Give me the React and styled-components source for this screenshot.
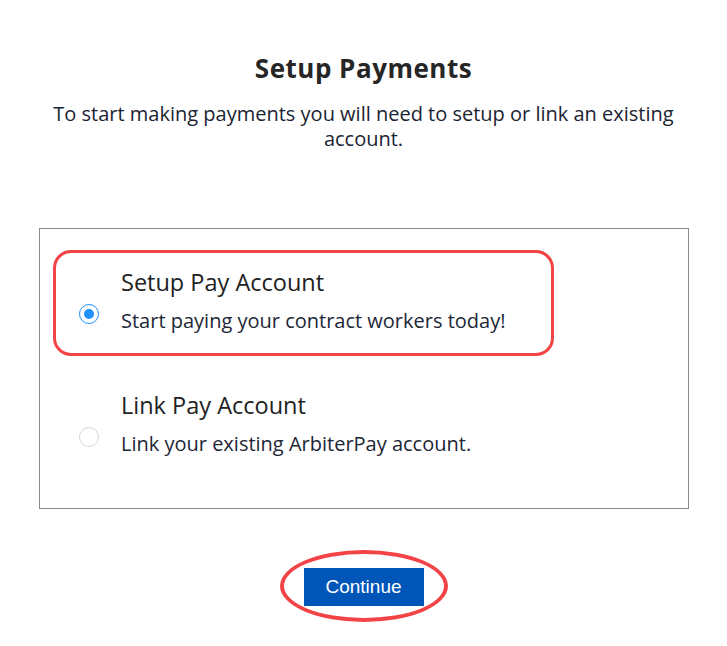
import React, { useState } from 'react'
import styled, { createGlobalStyle } from 'styled-components'

const GlobalStyle = createGlobalStyle`
  body {
    margin: 0;
    background: #fff;
    font-family: "Open Sans", "Liberation Sans", sans-serif;
  }
`

const options = [
  { id: 'setup', title: 'Setup Pay Account', text: 'Start paying your contract workers today!' },
  { id: 'link', title: 'Link Pay Account', text: 'Link your existing ArbiterPay account.' },
]

function App() {
  const [selected, setSelected] = useState('setup')

  return (
    <Page>
      <GlobalStyle />
      <Title>Setup Payments</Title>
      <Intro>To start making payments you will need to setup or link an existing account.</Intro>
      <Panel>
        {options.map((opt) => (
          <Option
            key={opt.id}
            $highlighted={opt.id === 'setup'}
            onClick={() => setSelected(opt.id)}
          >
            <Radio $checked={selected === opt.id} />
            <OptionBody>
              <OptionTitle>{opt.title}</OptionTitle>
              <OptionText>{opt.text}</OptionText>
            </OptionBody>
          </Option>
        ))}
      </Panel>
      <ButtonWrap>
        <Button>Continue</Button>
        <Circle />
      </ButtonWrap>
    </Page>
  )
}

const Page = styled.div`
  display: flex;
  flex-direction: column;
  align-items: center;
  padding-top: 51px;
  padding-bottom: 30px;
`
const Title = styled.h1`
  margin: 0;
  font-family: "Open Sans", "Liberation Sans", sans-serif;
  font-size: 26px;
  font-weight: 700;
  letter-spacing: 0.5px;
  color: #262626;
  line-height: 34px;
`
const Intro = styled.p`
  margin: 16px 0 0;
  width: 640px;
  text-align: center;
  font-size: 20px;
  line-height: 25px;
  color: #1b2432;
`
const Panel = styled.div`
  box-sizing: border-box;
  width: 650px;
  height: 281px;
  margin-top: 77px;
  margin-left: 1px;
  border: 1px solid #8a8a8a;
  padding: 21px 13px 0;
  display: flex;
  flex-direction: column;
  gap: 17px;
`
const Option = styled.div`
  box-sizing: border-box;
  width: 501px;
  height: 106px;
  border: 3px solid ${(p) => (p.$highlighted ? '#f24446' : 'transparent')};
  border-radius: 18px;
  display: flex;
  align-items: flex-start;
  padding: 14px 0 0 23px;
  cursor: pointer;
`
const Radio = styled.span`
  box-sizing: border-box;
  flex: none;
  width: 20px;
  height: 20px;
  margin-top: 37px;
  border-radius: 50%;
  border: 1px solid ${(p) => (p.$checked ? '#1e90ff' : '#d5d5d5')};
  display: flex;
  align-items: center;
  justify-content: center;
  &::after {
    content: '';
    width: 10px;
    height: 10px;
    border-radius: 50%;
    background: ${(p) => (p.$checked ? '#1e90ff' : 'transparent')};
  }
`
const OptionBody = styled.div`
  margin-left: 22px;
  display: flex;
  flex-direction: column;
`
const OptionTitle = styled.div`
  font-size: 23.5px;
  line-height: 30px;
  color: #222;
`
const OptionText = styled.div`
  margin-top: 11px;
  font-size: 20px;
  line-height: 26px;
  color: #1d2736;
`
const ButtonWrap = styled.div`
  position: relative;
  margin-top: 59px;
`
const Button = styled.button`
  display: block;
  width: 120px;
  height: 38px;
  border: none;
  background: #0055b8;
  color: #fff;
  font-family: "Liberation Sans", Arial, sans-serif;
  font-size: 19px;
  cursor: pointer;
`
const Circle = styled.span`
  position: absolute;
  z-index: 1;
  left: -24px;
  top: -18px;
  width: 168px;
  height: 72px;
  box-sizing: border-box;
  border: 4px solid #f24446;
  border-radius: 50%;
  pointer-events: none;
`

export default App
